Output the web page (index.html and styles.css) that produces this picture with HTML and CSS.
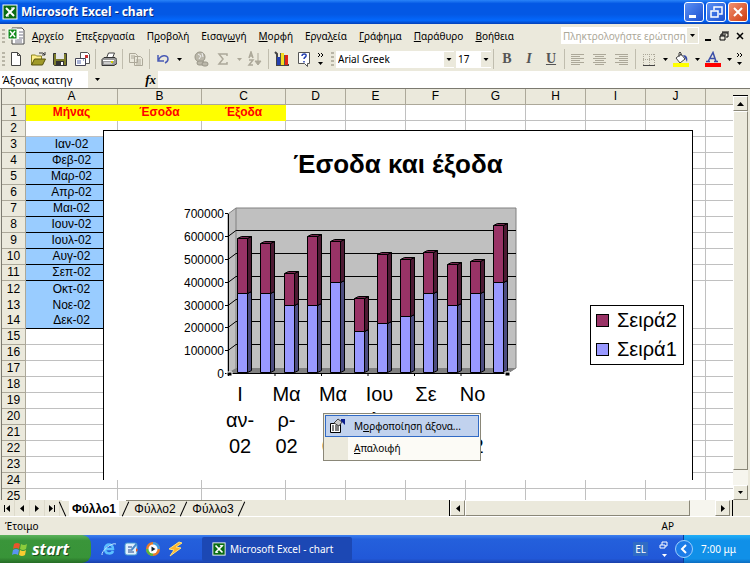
FILE: index.html
```html
<!DOCTYPE html>
<html lang="el">
<head>
    <meta charset="UTF-8">
    <title>Microsoft Excel - chart</title>
    <link rel="stylesheet" href="styles.css">
</head>
<body>
    <svg class="defs" width="0" height="0">
        <symbol id="excel" viewBox="0 0 16 16">
            <rect x="1" y="1" width="14" height="14" fill="#0a6b12" stroke="#fff"/>
            <path d="M4 4l8 8M12 4l-8 8" stroke="#fff" stroke-width="2"/>
            <path d="M4 12h3M9 4h4" stroke="#fff"/>
        </symbol>
        <symbol id="down" viewBox="0 0 5 3"><path d="M0 0h5L2.5 3z" fill="currentColor"/></symbol>
        <symbol id="left" viewBox="0 0 4 7"><path d="M4 0v7L0 3.5z" fill="currentColor"/></symbol>
        <symbol id="right" viewBox="0 0 4 7"><path d="M0 0v7l4-3.5z" fill="currentColor"/></symbol>
        <symbol id="up" viewBox="0 0 7 4"><path d="M0 4h7L3.5 0z" fill="currentColor"/></symbol>
        <symbol id="more" viewBox="0 0 8 16">
            <path d="M1 2l2 2-2 2M4 2l2 2-2 2" fill="none" stroke="#000"/>
            <path d="M1 11h5l-2.500 3z" fill="#000"/>
        </symbol>
    </svg>

    <header class="titlebar">
        <svg width="16" height="16"><use href="#excel"/></svg>
        <h1>Microsoft Excel - chart</h1>
        <button class="win" aria-label="Ελαχιστοποίηση"><svg width="16" height="16"><path d="M3 11h7v3H3z" fill="#fff"/></svg></button>
        <button class="win" aria-label="Επαναφορά"><svg width="16" height="16"><path d="M6 6V3h8v7h-3M3 7h7v6H3z" fill="none" stroke="#fff" stroke-width="1.500"/></svg></button>
        <button class="win close" aria-label="Κλείσιμο"><svg width="16" height="16"><path d="M4 4l8 8M12 4l-8 8" stroke="#fff" stroke-width="2"/></svg></button>
    </header>

    <nav class="menubar">
        <span class="grip"></span>
        <svg class="doc" width="18" height="18">
            <path d="M5 1h10l2 2v14H5z" fill="#fff" stroke="#444"/>
            <path d="M8 13h7M8 15h7M12 5h4M12 8h4M12 11h4" stroke="#778"/>
            <path d="M1 2h9v10H1z" fill="#128a1c" stroke="#fff"/>
            <path d="M3 4l5 6M8 4l-5 6" stroke="#fff" stroke-width="1.500"/>
        </svg>
        <button><u>Α</u>ρχείο</button>
        <button><u>Ε</u>πεξεργασία</button>
        <button>Π<u>ρ</u>οβολή</button>
        <button>Εισαγ<u>ω</u>γή</button>
        <button><u>Μ</u>ορφή</button>
        <button>Εργα<u>λ</u>εία</button>
        <button><u>Γ</u>ράφημα</button>
        <button><u>Π</u>αράθυρο</button>
        <button><u>Β</u>οήθεια</button>
        <div class="ask">
            <input type="text" aria-label="Ερώτηση" placeholder="Πληκτρολογήστε ερώτηση">
            <button aria-label="Ερωτήσεις"><svg width="5" height="3"><use href="#down"/></svg></button>
        </div>
        <button class="doc-win" aria-label="Ελαχιστοποίηση βιβλίου"><svg width="12" height="12"><path d="M3 10h6" stroke="#000" stroke-width="2"/></svg></button>
        <button class="doc-win" aria-label="Επαναφορά βιβλίου"><svg width="12" height="12"><path d="M4 5V3h6v4H8M2 6h5v4H2zM4 2h7M2 5h6" fill="none" stroke="#000"/></svg></button>
        <button class="doc-win" aria-label="Κλείσιμο βιβλίου"><svg width="12" height="12"><path d="M3 3l6 6M9 3l-6 6" stroke="#000" stroke-width="1.500"/></svg></button>
    </nav>

    <div class="toolbar">
        <span class="grip"></span>
        <button class="tool" aria-label="Δημιουργία"><svg width="16" height="16"><path d="M3.500 1.500h6l3 3v10h-9zM9.500 1.500v3h3" fill="#fff" stroke="#444"/></svg></button>
        <button class="tool" aria-label="Άνοιγμα"><svg width="16" height="16"><path d="M1.500 14V4h4l1 1h5v3" fill="#fff08a" stroke="#8c8420"/><path d="M1.500 14l3-6h11l-3 6z" fill="#a09a28" stroke="#55500c"/><path d="M9 2h4l2 2M15 1v3h-3" fill="none" stroke="#333"/></svg></button>
        <button class="tool" aria-label="Αποθήκευση"><svg width="16" height="16"><path d="M1.500 2.500h13v12h-12l-1-1z" fill="#7d7d2b" stroke="#333"/><path d="M4 2h8v6H4z" fill="#e5e5e5"/><path d="M4 10h8v4H4z" fill="#333"/><path d="M9 11h2v3H9z" fill="#fff"/></svg></button>
        <button class="tool" aria-label="Ηλεκτρονικό ταχυδρομείο"><svg width="16" height="16"><path d="M6.500 1.500h7l2 2v9h-9z" fill="#fff" stroke="#555"/><path d="M11 4h3v3h-3z" fill="#c33"/><path d="M1.500 7.500h10v7h-10z" fill="#fff" stroke="#445"/><path d="M3 10h4M3 12h4M9 9h1" stroke="#5566aa"/></svg></button>
        <span class="sep"></span>
        <button class="tool" aria-label="Εκτύπωση"><svg width="16" height="16"><path d="M5.500 7l2-5h6l-2 5" fill="#fff" stroke="#444"/><path d="M1 8.500l2-2h11l2 2v4l-3 2H1z" fill="#999" stroke="#333"/><path d="M2 9.500h11M3 12h8" stroke="#fff"/><path d="M10 11h2" stroke="#cc0" stroke-width="2"/></svg></button>
        <span class="sep"></span>
        <button class="tool" aria-label="Αντιγραφή"><svg width="16" height="16"><path d="M1.500 2.500h6l2 2v7h-8zM6.500 5.500h6l2 2v7h-8z" fill="#ebe9dc" stroke="#aca899"/><path d="M3 5h4M3 7h3M8 9h5M8 11h5M8 13h5" stroke="#aca899"/></svg></button>
        <span class="sep"></span>
        <button class="tool" aria-label="Αναίρεση"><svg width="16" height="16"><path d="M3 4v6h6M3.500 9.500C5 4 13 3 13 8c0 2-1 3-3 4" fill="none" stroke="#4a5bb5" stroke-width="1.500"/></svg></button>
        <button class="arrow" aria-label="Λίστα αναίρεσης"><svg width="5" height="3"><use href="#down"/></svg></button>
        <span class="space"></span>
        <button class="tool" aria-label="Υπερ-σύνδεση"><svg width="16" height="16" fill="#bbb8aa" stroke="#999688"><circle cx="7" cy="6" r="5"/><path d="M5 3l3 2-2 3M9 2l1 4" fill="none" stroke="#eee"/><rect x="4" y="10" width="7" height="4" rx="2"/><rect x="9" y="11" width="6" height="4" rx="2"/></svg></button>
        <button class="tool" aria-label="Άθροιση"><svg width="16" height="16"><path d="M12 5V3H4l4 5-4 5h8v-2" fill="none" stroke="#aca899" stroke-width="1.500"/></svg></button>
        <button class="arrow off" aria-label="Συναρτήσεις"><svg width="5" height="3"><use href="#down"/></svg></button>
        <button class="tool" aria-label="Ταξινόμηση"><svg width="16" height="16" fill="none" stroke="#aca899"><path d="M2 7l2-6 2 6M3 5h3M2 9h4l-4 5h4" stroke-width="1.500"/><path d="M11 2v11M8 10l3 4 3-4z" fill="#aca899"/></svg></button>
        <span class="sep"></span>
        <button class="tool" aria-label="Οδηγός γραφημάτων"><svg width="16" height="16"><path d="M1 1l2 2v11h12" fill="none" stroke="#444" stroke-width="2"/><path d="M3 6h3v8H3z" fill="#2440b0"/><path d="M6 2h4v12H6z" fill="#f5dd20"/><path d="M10 4h4v10h-4z" fill="#e02418"/><path d="M6.500 2v12M10.500 4v10" stroke="#555"/></svg></button>
        <button class="tool" aria-label="Βοήθεια"><svg width="16" height="16"><path d="M2.500 1.500h11v11h-2v3l-3-3h-6z" fill="#fff" stroke="#555"/><path d="M6 5c0-3 5-2.500 4 0-.5 1.500-2 1.500-2 3M8 10v1.500" fill="none" stroke="#2440b0" stroke-width="1.500"/></svg></button>
        <button class="overflow" aria-label="Επιλογές γραμμής εργαλείων"><svg width="8" height="16"><use href="#more"/></svg></button>
        <span class="grip"></span>
        <div class="picker font">
            <select aria-label="Γραμματοσειρά"><option>Arial Greek</option></select>
            <svg width="5" height="3"><use href="#down"/></svg>
        </div>
        <div class="picker size">
            <select aria-label="Μέγεθος"><option>17</option></select>
            <svg width="5" height="3"><use href="#down"/></svg>
        </div>
        <span class="sep"></span>
        <button class="tool letter"><b>B</b></button>
        <button class="tool letter"><i>I</i></button>
        <button class="tool letter"><u>U</u></button>
        <span class="sep"></span>
        <button class="tool" aria-label="Στοίχιση αριστερά"><svg width="16" height="16"><path d="M1 3.500h13M1 5.500h9M1 7.500h13M1 9.500h9M1 11.500h13M1 13.500h9" stroke="#aca899"/></svg></button>
        <button class="tool" aria-label="Στοίχιση στο κέντρο"><svg width="16" height="16"><path d="M1 3.500h13M3 5.500h9M1 7.500h13M3 9.500h9M1 11.500h13M3 13.500h9" stroke="#aca899"/></svg></button>
        <button class="tool" aria-label="Στοίχιση δεξιά"><svg width="16" height="16"><path d="M1 3.500h13M5 5.500h9M1 7.500h13M5 9.500h9M1 11.500h13M5 13.500h9" stroke="#aca899"/></svg></button>
        <span class="sep"></span>
        <button class="tool" aria-label="Περιγράμματα"><svg width="16" height="16"><path d="M2.500 3v11M8.500 3v11M13.500 3v11M2 3.500h12M2 8.500h12" stroke="#aca899" stroke-dasharray="1 1"/><path d="M2 14.500h12" stroke="#444"/></svg></button>
        <button class="arrow" aria-label="Λίστα περιγραμμάτων"><svg width="5" height="3"><use href="#down"/></svg></button>
        <button class="tool" aria-label="Χρώμα γεμίσματος"><svg width="16" height="16"><path d="M3 7l5-4 4 5-5 4z" fill="#fff" stroke="#444"/><path d="M6 6V2q1-2 2 0v3" fill="none" stroke="#444"/><path d="M10 4c4 0 5 3 4 7l-2-4z" fill="#3a4ea8"/><path d="M0 12h16v4H0z" fill="#ff0"/></svg></button>
        <button class="arrow" aria-label="Χρώματα γεμίσματος"><svg width="5" height="3"><use href="#down"/></svg></button>
        <button class="tool" aria-label="Χρώμα γραμματοσειράς"><svg width="16" height="16"><path d="M3 10.500l5-9 3 9M5 7.500h5M1 10.500h4M9 10.500h4" fill="none" stroke="#3a4ea8" stroke-width="1.500"/><path d="M0 12h16v4H0z" fill="#f00"/></svg></button>
        <button class="arrow" aria-label="Χρώματα γραμματοσειράς"><svg width="5" height="3"><use href="#down"/></svg></button>
        <button class="overflow" aria-label="Περισσότερα κουμπιά"><svg width="8" height="16"><use href="#more"/></svg></button>
    </div>

    <div class="formula">
        <input class="name-box" type="text" aria-label="Πλαίσιο ονόματος" value="Άξονας κατηγ">
        <button class="name-arrow" aria-label="Ονόματα"><svg width="5" height="3"><use href="#down"/></svg></button>
        <button class="fx" aria-label="Εισαγωγή συνάρτησης"><i>fx</i></button>
        <input class="formula-box" type="text" aria-label="Τύπος">
    </div>

    <main class="workbook">
        <div class="sheet">
            <table>
                <colgroup>
                    <col class="col-num"><col class="col-a"><col class="col-b"><col class="col-b">
                    <col class="col"><col class="col"><col class="col"><col class="col">
                    <col class="col"><col class="col"><col class="col"><col>
                </colgroup>
                <thead>
                    <tr><th></th><th>A</th><th>B</th><th>C</th><th>D</th><th>E</th><th>F</th><th>G</th><th>H</th><th>I</th><th>J</th><th></th></tr>
                </thead>
                <tbody id="rows"></tbody>
            </table>

            <figure class="chart">
                <figcaption>Έσοδα και έξοδα</figcaption>
                <svg id="plot" width="420" height="290"></svg>
                <ul class="legend">
                    <li><span class="key red"></span>Σειρά2</li>
                    <li><span class="key blue"></span>Σειρά1</li>
                </ul>
                <div class="context-menu">
                    <button class="active">
                        <svg width="16" height="16"><path d="M1.500 5.500h10v9h-10z" fill="#fff" stroke="#000"/><path d="M3 8h2M6 8h4M3 10h2M6 10h4M3 12h2M6 12h4" stroke="#000"/><path d="M5 5l4-4 4 3-3 4z" fill="#ccc" stroke="#444"/><path d="M12 1h4v6l-4-4z" fill="#0a1c8c"/></svg>
                        <span>Μ<u>ο</u>ρφοποίηση άξονα...</span>
                    </button>
                    <button><span><u>Α</u>παλοιφή</span></button>
                </div>
            </figure>
        </div>
        <div class="vscroll">
            <span class="split"></span>
            <button aria-label="Πάνω"><svg width="7" height="4"><use href="#up"/></svg></button>
            <div class="track"><span class="thumb"></span></div>
            <button aria-label="Κάτω"><svg width="5" height="3"><use href="#down"/></svg></button>
        </div>
    </main>

    <div class="tabbar">
        <button class="nav" aria-label="Πρώτο φύλλο"><svg width="7" height="7"><path d="M0 0h1v7H0zM6 0v7L2 3.500z"/></svg></button>
        <button class="nav" aria-label="Προηγούμενο φύλλο"><svg width="4" height="7"><use href="#left"/></svg></button>
        <button class="nav" aria-label="Επόμενο φύλλο"><svg width="4" height="7"><use href="#right"/></svg></button>
        <button class="nav" aria-label="Τελευταίο φύλλο"><svg width="7" height="7"><path d="M5 0h1v7H5zM0 0v7l4-3.500z"/></svg></button>
        <button class="tab current"><span>Φύλλο1</span></button>
        <button class="tab"><span>Φύλλο2</span></button>
        <button class="tab"><span>Φύλλο3</span></button>
        <div class="hscroll">
            <span class="split"></span>
            <button aria-label="Αριστερά"><svg width="4" height="7"><use href="#left"/></svg></button>
            <div class="track"><span class="thumb"></span></div>
            <button aria-label="Δεξιά"><svg width="4" height="7"><use href="#right"/></svg></button>
            <span class="split"></span>
        </div>
    </div>

    <footer class="status">
        <span>Έτοιμο</span>
        <span class="indicator">ΑΡ</span>
    </footer>

    <div class="taskbar">
        <button class="start">
            <svg width="18" height="18">
                <path d="M3 4q3-2 6 0L8 9Q5 7 2 9z" fill="#e8552b"/>
                <path d="M10 4q3 2 6 0l-1 5q-3 2-6 0z" fill="#8ccc3c"/>
                <path d="M2 10q3-2 6 0l-1 5q-3-2-6 0z" fill="#5a94f0"/>
                <path d="M9 10q3 2 6 0l-1 5q-3 2-6 0z" fill="#f8cc30"/>
            </svg>
            start
        </button>
        <div class="quick">
            <button aria-label="Internet Explorer"><svg width="16" height="16" fill="none"><path d="M4 8h8c0-6-8-6-8 0s7 5 8 2" stroke="#5cc0ff" stroke-width="2.500"/><path d="M1 14C0 10 11 1 15 3" stroke="#bfe4ff"/></svg></button>
            <button aria-label="Επιφάνεια εργασίας"><svg width="16" height="16"><rect x="2" y="2" width="12" height="12" rx="2" fill="#dff0ff" stroke="#49c"/><path d="M5 6h4M5 9h4M5 11h6" stroke="#248"/><path d="M8 8l5-6 1 2-5 6z" fill="#48c"/><path d="M13 7l2 2-2 2z" fill="#e52"/></svg></button>
            <button aria-label="Media Player"><svg width="16" height="16"><circle cx="8" cy="8" r="7" fill="#e87c28"/><path d="M8 1a7 7 0 0 1 7 7H8z" fill="#3d9be0"/><path d="M8 15a7 7 0 0 1-7-7h7z" fill="#58b83c"/><circle cx="8" cy="8" r="4.500" fill="#fff"/><path d="M6.500 5.500v5l4-2.500z" fill="#123"/></svg></button>
            <button aria-label="Winamp"><svg width="16" height="16"><path d="M12 1L2 8l5 1-4 6 11-8-5-1 6-4z" fill="#ffb52c" stroke="#ffe27a"/></svg></button>
        </div>
        <button class="task"><svg width="14" height="14"><use href="#excel"/></svg>Microsoft Excel - chart</button>
        <span class="lang">EL</span>
        <svg class="lang-bar" width="10" height="18"><path d="M3 5V2h5v4H6M1 5h5v3H1z" fill="none" stroke="#fff"/><path d="M3 14h5l-2.500 3z" fill="#fff"/></svg>
        <div class="tray">
            <button class="expand" aria-label="Εμφάνιση εικονιδίων"><svg width="8" height="10"><path d="M6 1L2 5l4 4" fill="none" stroke="#fff" stroke-width="2"/></svg></button>
            <time>7:00 μμ</time>
        </div>
    </div>

    <script src="script.js"></script>
</body>
</html>
```
FILE: styles.css
```css
* {
    box-sizing: border-box;
}
body {
    display: flex;
    flex-direction: column;
    height: 100vh;
    margin: 0;
    overflow: hidden;
    background-color: #ebe9dc;
    color: #000;
    font-family: "Noto Sans", "Open Sans", sans-serif;
    font-size: 10px;
    line-height: 14px;
}
button, input, select {
    margin: 0;
    padding: 0;
    border: 0;
    border-radius: 0;
    background: none;
    color: inherit;
    font: inherit;
}
button {
    display: flex;
    align-items: center;
    justify-content: center;
    flex-shrink: 0;
    white-space: nowrap;
}
svg {
    display: block;
    flex-shrink: 0;
}
.defs {
    position: absolute;
}

/* title bar */
.titlebar {
    display: flex;
    align-items: center;
    gap: 2px;
    height: 24px;
    padding: 0 2px;
    background: linear-gradient(#2a84f8, #0458e4 15%, #0458e4 60%, #0468fc 85%, #0340b8);
}
.titlebar h1 {
    flex: 1;
    margin: 0 0 0 1px;
    color: #fff;
    font-size: 12px;
    line-height: 20px;
    text-shadow: 1px 1px #0a2c80;
}
.win {
    width: 20px;
    height: 20px;
    border: 1px solid #fff;
    border-radius: 3px;
    background: linear-gradient(135deg, #5a90f4, #1c50d0);
}
.close {
    background: linear-gradient(135deg, #f09070, #d03c10);
}

/* menus */
.menubar {
    display: flex;
    align-items: center;
    height: 23px;
    padding: 0 3px 0 2px;
}
.menubar > button {
    margin-right: 12px;
}
.grip {
    width: 3px;
    height: 14px;
    flex-shrink: 0;
    background: repeating-linear-gradient(#b8b5a6 0 2px, transparent 2px 4px);
}
.doc {
    margin: 0 7px 0 2px;
}
.ask {
    display: flex;
    flex: 0 1 138px;
    height: 17px;
    margin-left: auto;
    background-color: #fff;
}
.ask input {
    flex: 1;
    width: 100%;
    padding-left: 2px;
}
.ask input::placeholder {
    color: #aca899;
    opacity: 1;
}
.ask button {
    width: 11px;
    margin: 1px;
    background-color: #ebe9dc;
}
.menubar > .doc-win {
    width: 14px;
    margin: 0 0 0 2px;
}

/* toolbar */
.toolbar {
    display: flex;
    align-items: center;
    height: 24px;
    padding-left: 2px;
}
.tool {
    width: 22px;
    height: 22px;
}
.sep {
    width: 1px;
    height: 20px;
    margin: 0 2px;
    flex-shrink: 0;
    background-color: #c0bdae;
}
.arrow {
    width: 10px;
    height: 20px;
}
.space {
    width: 6px;
    flex-shrink: 0;
}
.off {
    color: #aca899;
}
.overflow {
    width: 12px;
    margin-right: 4px;
}
.picker {
    display: flex;
    align-items: center;
    position: relative;
    height: 17px;
    margin-left: 2px;
    background-color: #fff;
}
.picker select {
    width: 100%;
    height: 17px;
    padding-left: 2px;
    appearance: none;
}
.picker svg {
    position: absolute;
    right: 0;
    width: 10px;
    height: 15px;
    padding: 6px 2px;
    background-color: #ebe9dc;
}
.font {
    width: 118px;
}
.size {
    width: 35px;
}
.letter {
    color: #555;
    font-family: "Liberation Serif", serif;
    font-size: 14px;
    font-weight: bold;
}

/* formula bar */
.formula {
    display: flex;
    height: 17px;
    flex-shrink: 0;
}
.name-box {
    width: 88px;
    padding-left: 2px;
    background-color: #fff;
    font-size: 11px;
}
.name-arrow {
    width: 18px;
}
.fx {
    width: 52px;
    justify-content: flex-end;
    padding-right: 2px;
    font-family: "Liberation Serif", serif;
    font-size: 13px;
    font-weight: bold;
}
.formula-box {
    flex: 1;
    background-color: #fff;
}

/* sheet */
.workbook {
    display: flex;
    flex: 1;
    min-height: 0;
    padding: 0 2px 0 1px;
    border-top: 1px solid #7c7a70;
}
.sheet {
    position: relative;
    flex: 1;
    overflow: hidden;
    border-left: 1px solid #7c7a70;
    background-color: #fff;
}
table {
    width: 100%;
    table-layout: fixed;
    border-spacing: 0;
    font-family: "Liberation Sans", sans-serif;
    font-size: 12px;
    line-height: 15px;
}
.col-num {
    width: 24px;
}
.col-a {
    width: 92px;
}
.col-b {
    width: 84px;
}
.col {
    width: 60px;
}
th, td {
    height: 16px;
    padding: 0;
    overflow: hidden;
    border-right: 1px solid #c0c0c0;
    border-bottom: 1px solid #c0c0c0;
    text-align: center;
    white-space: nowrap;
}
th {
    border-color: #aca899;
    background-color: #ebe9dc;
    font-weight: normal;
}
td:last-child, th:last-child {
    border-right: 0;
}
td.label {
    border-color: #ff0;
    background-color: #ff0;
    color: #f00;
    font-weight: bold;
}
td.month {
    border-color: #000;
    background-color: #99ccff;
}
tr.joined th, tr.joined td {
    border-bottom: 0;
}

/* chart object floating on the cells */
.chart {
    position: absolute;
    top: 41px;
    left: 101px;
    width: 590px;
    height: 350px;
    margin: 0;
    border: 1px solid #000;
    border-bottom: 0;
    background-color: #fff;
    font-family: "Liberation Sans", sans-serif;
    font-size: 20px;
}
.chart figcaption {
    padding-top: 17px;
    font-size: 26px;
    font-weight: bold;
    line-height: 32px;
    text-align: center;
}
#plot {
    margin-left: 70px;
}
#plot text {
    font-size: 12px;
}
#plot .category {
    font-size: 20px;
}
.legend {
    position: absolute;
    top: 174px;
    right: 8px;
    width: 94px;
    margin: 0;
    padding: 0 5px;
    border: 1px solid #000;
    list-style: none;
}
.legend li {
    display: flex;
    align-items: center;
    gap: 8px;
    line-height: 29px;
}
.key {
    width: 13px;
    height: 13px;
    border: 1px solid #000;
}
.red {
    background-color: #993366;
}
.blue {
    background-color: #9999ff;
}
.context-menu {
    position: absolute;
    top: 282px;
    left: 219px;
    width: 158px;
    padding: 1px;
    border: 1px solid #8a8778;
    background: linear-gradient(90deg, #ebe9dc 24px, #fcfbf6 24px);
    font-family: "Noto Sans", "Open Sans", sans-serif;
    font-size: 10px;
}
.context-menu button {
    justify-content: flex-start;
    width: 100%;
    height: 22px;
    padding-left: 29px;
}
.context-menu .active {
    gap: 9px;
    padding-left: 3px;
    border: 1px solid #316ac5;
    background-color: #c1d2ee;
}

/* scroll bars */
.vscroll {
    display: flex;
    flex-direction: column;
    width: 15px;
}
.vscroll button, .hscroll button, .thumb {
    border: 1px solid;
    border-color: #fff #8a8778 #8a8778 #fff;
    background-color: #ebe9dc;
}
.vscroll button {
    height: 15px;
}
.vscroll .split {
    height: 7px;
    border-bottom: 1px solid #000;
}
.track {
    display: flex;
    flex: 1;
    background-color: #f6f5ee;
}
.vscroll .track {
    flex-direction: column;
}
.vscroll .thumb {
    height: 96%;
}

/* sheet tabs */
.tabbar {
    display: flex;
    height: 17px;
    flex-shrink: 0;
    padding-right: 17px;
    border-bottom: 1px solid #fff;
}
.nav {
    width: 15px;
    border-right: 1px solid #dddacb;
}
.tab {
    width: 58px;
    border-top: 1px solid #8a8778;
    font-family: "Liberation Sans", sans-serif;
    font-size: 12px;
}
.tab::before, .tab::after {
    content: "";
    width: 1px;
    height: 16px;
    background-color: #000;
    transform: rotate(-24deg);
}
.tab::before {
    margin-right: auto;
}
.tab::after {
    margin-left: auto;
    transform: rotate(24deg);
}
.tab:not(.current)::before {
    visibility: hidden;
}
.current {
    width: 64px;
    margin-left: 2px;
    border-top-color: #fff;
    background: linear-gradient(#fff, #fff) center / 50px 100% no-repeat;
    font-weight: bold;
}
.hscroll {
    display: flex;
    width: 39%;
    margin-left: auto;
}
.hscroll .split {
    width: 3px;
    border-right: 1px solid #000;
}
.hscroll button {
    width: 15px;
}
.hscroll .thumb {
    width: 90%;
}

/* status bar */
.status {
    display: flex;
    justify-content: space-between;
    height: 18px;
    flex-shrink: 0;
    padding: 2px 76px 0 5px;
}

/* taskbar */
.taskbar {
    display: flex;
    align-items: center;
    height: 28px;
    flex-shrink: 0;
    background: linear-gradient(#3c80f0, #2460dc 15%, #2158d8 85%, #1a40a8);
    color: #fff;
}
.start {
    gap: 3px;
    width: 91px;
    height: 28px;
    padding-right: 11px;
    border-radius: 0 9px 9px 0;
    background: linear-gradient(#5cb35c, #3a953a 20%, #389438 80%, #256c25);
    font-size: 16px;
    font-style: italic;
    font-weight: bold;
    text-shadow: 1px 1px #1c4c1c;
}
.quick {
    display: flex;
    gap: 6px;
    margin: 0 19px 0 10px;
}
.task {
    justify-content: flex-start;
    gap: 4px;
    width: 150px;
    height: 24px;
    padding-left: 10px;
    border-radius: 2px;
    background-color: #1c48b4;
}
.lang {
    margin: 0 11px 0 auto;
    padding: 0 2px;
    background-color: #306cc4;
}
.tray {
    display: flex;
    align-items: center;
    height: 28px;
    margin-left: 14px;
    padding-right: 14px;
    border-left: 1px solid #0a3c98;
    background: linear-gradient(#20b0f8, #1090e8 20%, #1090e8 85%, #0c6cc0);
    font-size: 10px;
}
.expand {
    width: 18px;
    height: 18px;
    margin: 0 8px 0 -9px;
    border: 1px solid #9cd0ff;
    border-radius: 9px;
    background-color: #1c7ce8;
}
```
FILE: script.js
```js
const months = ["Ιαν", "Φεβ", "Μαρ", "Απρ", "Μαι", "Ιουν", "Ιουλ", "Αυγ", "Σεπ", "Οκτ", "Νοε", "Δεκ"];
const labels = ["Μήνας", "Έσοδα", "Έξοδα"];

// Cells
let html = "";
for (let row = 1; row <= 25; row++) {
    html += `<tr class="${row === 12 || row === 13 ? "joined" : ""}"><th>${row}</th>`;
    for (let col = 0; col < 11; col++) {
        if (row === 1 && col < 3) {
            html += `<td class="label">${labels[col]}</td>`;
        } else if (col === 0 && row >= 3 && row <= 14) {
            html += `<td class="month">${months[row - 3]}-02</td>`;
        } else {
            html += "<td></td>";
        }
    }
    html += "</tr>";
}
document.getElementById("rows").innerHTML = html;

// Stacked 3D columns, values in thousands
const lower = [350, 350, 300, 300, 400, 185, 220, 250, 350, 300, 350, 400];
const total = [590, 570, 440, 600, 580, 330, 520, 500, 530, 480, 490, 650];
const categories = [["Ι", "αν-"], ["Μα", "ρ-"], ["Μα", "ι-"], ["Ιου", "λ-"], ["Σε", "π-"], ["Νο", "ε-"]];
const base = 193;
const scale = 0.228;
const left = 54;

let svg = `<path d="M${left} 34l8-6h280v160l-8 5H${left}z" fill="#c0c0c0" stroke="#808080"/>
    <path d="M${left} 193l8-5h280l-8 5z" fill="#808080"/>
    <path d="M62 28v160" stroke="#808080"/>`;

for (let i = 0; i <= 7; i++) {
    const y = Math.round(base - i * 100 * scale) + 0.5;
    svg += `<text x="50" y="${y + 4}" text-anchor="end">${i * 100000}</text>`;
    svg += `<path d="M51 ${y}h3" stroke="#000"/>`;
    if (i > 0 && i < 7) {
        svg += `<path d="M54 ${y}l8-6h280" fill="none" stroke="#000"/>`;
    }
}

function block(x, top, bottom, front, side, cap) {
    return `<path d="M${x + 10} ${top}l4-2V${bottom - 2}l-4 2z" fill="${side}" stroke="#000"/>
        <path d="M${x} ${top}l4-2h10l-4 2z" fill="${cap}" stroke="#000"/>
        <path d="M${x} ${top}h10V${bottom}h-10z" fill="${front}" stroke="#000"/>`;
}

for (let i = 0; i < 12; i++) {
    const x = Math.round(63 + i * 23.3) + 0.5;
    const mid = Math.round(base - lower[i] * scale) + 0.5;
    const top = Math.round(base - total[i] * scale) + 0.5;
    svg += block(x, mid, base - 0.5, "#9999ff", "#4d4d80", "#7373bf");
    svg += block(x, top, mid, "#993366", "#4d1a33", "#73264d");
}

svg += `<path d="M54.5 34v159.500h279" fill="none" stroke="#000"/>`;
svg += `<path d="M53 192h5v4h-5zM331 192h5v4h-5z" stroke="#fff"/>`;

categories.forEach((lines, i) => {
    const x = 66 + i * 46.5;
    svg += `<path d="M${54.5 + i * 46.5} 193v3" stroke="#000"/>`;
    [...lines, "02"].forEach((line, n) => {
        svg += `<text class="category" x="${x}" y="${221 + n * 26}" text-anchor="middle">${line}</text>`;
    });
});
document.getElementById("plot").innerHTML = svg;
```
